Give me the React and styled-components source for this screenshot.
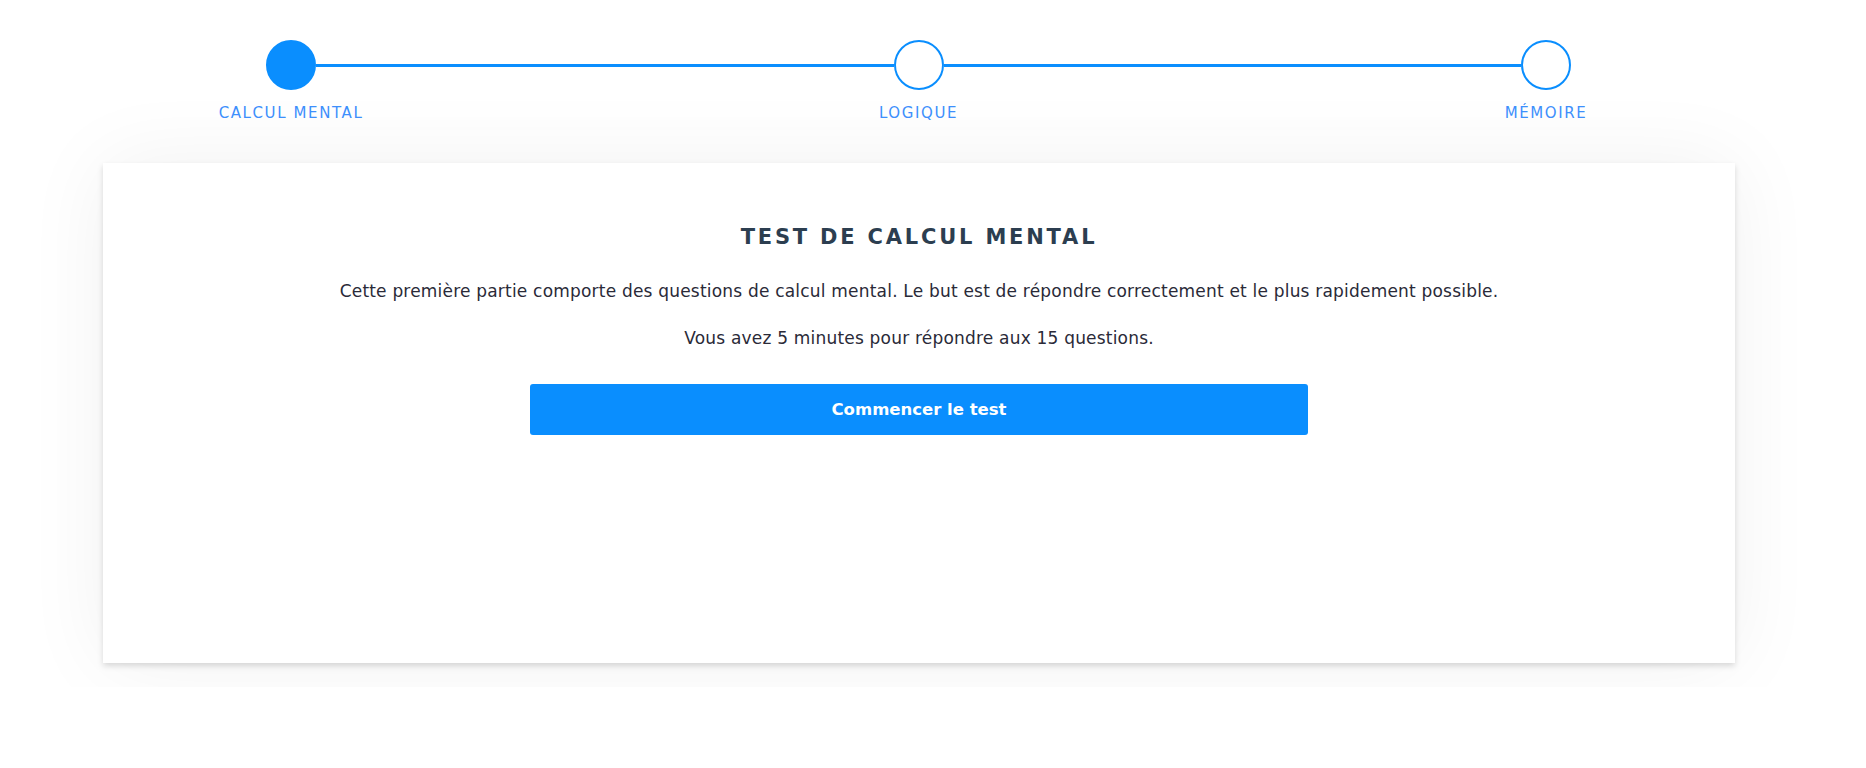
import React from "react";
import styled, { createGlobalStyle } from "styled-components";

const GlobalStyle = createGlobalStyle`
  body {
    margin: 0;
    background: #fff;
    font-family: "DejaVu Sans", "Inter", sans-serif;
  }
`;

const Page = styled.div`
  overflow: hidden;
  padding: 40px 131px 24px 103px;
`;

const Stepper = styled.div`
  display: flex;
  align-items: flex-start;
  padding: 0 164px 0 163px;
`;

const Step = styled.div`
  display: flex;
  flex-direction: column;
  align-items: center;
  width: 50px;
`;

const Circle = styled.div`
  box-sizing: border-box;
  width: 50px;
  height: 50px;
  border-radius: 50%;
  border: 2px solid #0a8efe;
  background: ${(p) => (p.active ? "#0a8efe" : "#fff")};
`;

const Connector = styled.div`
  flex: 1;
  height: 3px;
  margin-top: 24px;
  background: #0a8efe;
`;

const StepLabel = styled.div`
  margin-top: 14px;
  white-space: nowrap;
  font-size: 15px;
  letter-spacing: 1.6px;
  color: #3d8ffc;
`;

const Card = styled.div`
  margin-top: 41px;
  height: 500px;
  box-sizing: border-box;
  background: #fff;
  box-shadow: 0 0 80px rgba(0, 0, 0, 0.06), 0 3px 6px rgba(0, 0, 0, 0.14);
  display: flex;
  flex-direction: column;
  align-items: center;
  padding-top: 62px;
`;

const Title = styled.h1`
  margin: 0 0 32px;
  font-size: 21px;
  font-weight: 700;
  letter-spacing: 2.8px;
  color: #2c3e50;
`;

const Text = styled.p`
  margin: 0 0 27px;
  font-size: 17px;
  letter-spacing: 0.2px;
  color: #2a2a38;
`;

const StartButton = styled.button`
  margin-top: 9px;
  width: 778px;
  height: 51px;
  border: none;
  border-radius: 3px;
  background: #0a8efe;
  color: #fff;
  font-family: inherit;
  font-size: 16.5px;
  font-weight: 700;
  cursor: pointer;
`;

const steps = [
  { label: "CALCUL MENTAL", active: true },
  { label: "LOGIQUE", active: false },
  { label: "MÉMOIRE", active: false },
];

function App() {
  return (
    <>
      <GlobalStyle />
      <Page>
        <Stepper>
          {steps.map((step, i) => (
            <React.Fragment key={step.label}>
              {i > 0 && <Connector />}
              <Step>
                <Circle active={step.active} />
                <StepLabel>{step.label}</StepLabel>
              </Step>
            </React.Fragment>
          ))}
        </Stepper>
        <Card>
          <Title>TEST DE CALCUL MENTAL</Title>
          <Text>
            Cette première partie comporte des questions de calcul mental. Le but
            est de répondre correctement et le plus rapidement possible.
          </Text>
          <Text>Vous avez 5 minutes pour répondre aux 15 questions.</Text>
          <StartButton>Commencer le test</StartButton>
        </Card>
      </Page>
    </>
  );
}

export default App;
